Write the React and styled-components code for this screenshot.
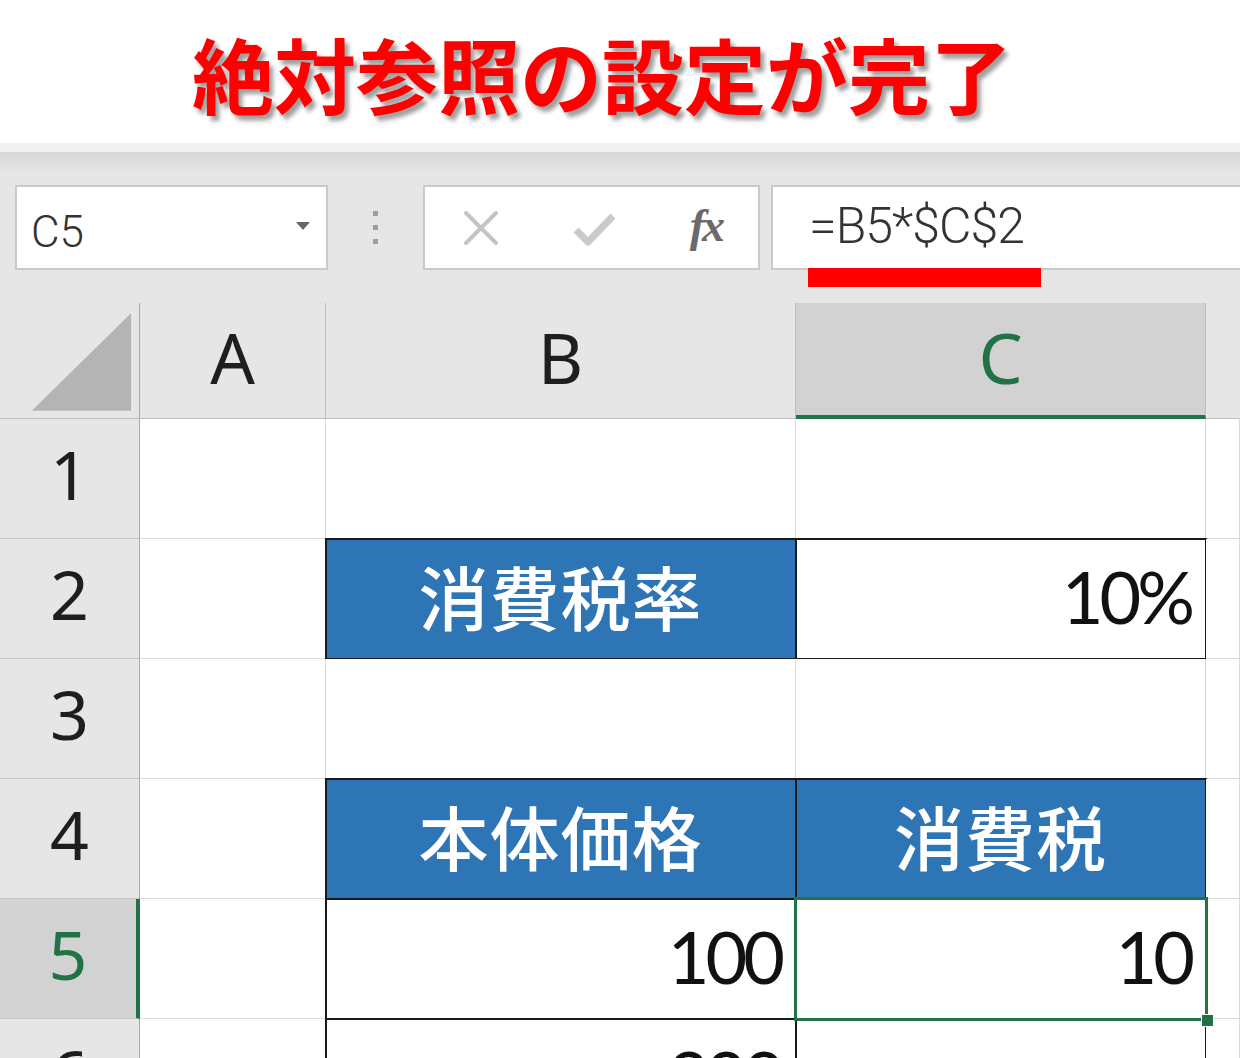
import React from "react";
import styled, { createGlobalStyle } from "styled-components";

// ---- Data ----

const columns = [
	{ key: "A", width: 186 },
	{ key: "B", width: 470 },
	{ key: "C", width: 410, selected: true },
];

const rows = [
	{ n: 1, cells: [{}, {}, {}] },
	{
		n: 2,
		cells: [
			{},
			{ text: "消費税率", head: true },
			{ text: "10%", boxed: true, num: true },
		],
	},
	{ n: 3, cells: [{}, {}, {}] },
	{
		n: 4,
		cells: [{}, { text: "本体価格", head: true }, { text: "消費税", head: true }],
	},
	{
		n: 5,
		selected: true,
		cells: [
			{},
			{ text: "100", boxed: true, num: true },
			{ text: "10", boxed: true, num: true, selected: true },
		],
	},
	{
		n: 6,
		cells: [{}, { text: "200", boxed: true, num: true }, { boxed: true }],
	},
];

// ---- Component ----

const App = () => {
	return (
		<>
			<GlobalStyle />
			<Page>
				<TitleBar>
					<Title>絶対参照の設定が完了</Title>
				</TitleBar>
				<Toolbar>
					<NameBox>
						<NameText>C5</NameText>
						<Caret />
					</NameBox>
					<Grip>
						<i />
						<i />
						<i />
					</Grip>
					<ButtonBox>
						<svg width="40" height="40" viewBox="0 0 40 40">
							<path
								d="M5 5 L35 35 M35 5 L5 35"
								stroke="#c4c4c4"
								strokeWidth="4"
								strokeLinecap="round"
								fill="none"
							/>
						</svg>
						<svg width="44" height="40" viewBox="0 0 44 40">
							<path
								d="M3 22 L15 34 L40 8"
								stroke="#cacaca"
								strokeWidth="7"
								strokeLinejoin="round"
								fill="none"
							/>
						</svg>
						<Fx>fx</Fx>
					</ButtonBox>
					<FormulaBox>
						<FormulaText>=B5*$C$2</FormulaText>
						<Underline />
					</FormulaBox>
				</Toolbar>
				<Sheet>
					<Corner>
						<svg width="140" height="116" viewBox="0 0 140 116">
							<polygon points="32,108 132,108 132,10" fill="#b4b4b4" />
						</svg>
					</Corner>
					{columns.map((c) => (
						<ColHeader key={c.key} $selected={c.selected}>
							{c.key}
						</ColHeader>
					))}
					<ColHeader $last />
					{rows.map((r) => (
						<React.Fragment key={r.n}>
							<RowHeader $selected={r.selected}>{r.n}</RowHeader>
							{r.cells.map((cell, i) => (
								<Cell
									key={i}
									$head={cell.head}
									$boxed={cell.boxed || cell.head}
									$num={cell.num}
									$selected={cell.selected}
								>
									{cell.text}
									{cell.selected && <Handle />}
								</Cell>
							))}
							<Cell />
						</React.Fragment>
					))}
				</Sheet>
			</Page>
		</>
	);
};

export default App;

// ---- Style ----

const GlobalStyle = createGlobalStyle`
	html, body {
		margin: 0;
		padding: 0;
		background: #fff;
		overflow: hidden;
	}
	* {
		box-sizing: border-box;
	}
`;

const Page = styled.div`
	width: 1240px;
	height: 1058px;
	overflow: hidden;
	font-family: "Noto Sans", "Noto Sans CJK JP", sans-serif;
`;

const TitleBar = styled.div`
	height: 152px;
	background: #fff;
	display: flex;
	align-items: center;
	justify-content: center;
	padding-right: 36px;
	padding-top: 2px;
	border-bottom: 9px solid #f2f1ef;
`;

const Title = styled.h1`
	margin: 0;
	font-family: "Noto Sans CJK JP", sans-serif;
	font-weight: 700;
	font-size: 82px;
	line-height: 1;
	color: #ff0000;
	text-shadow: 4px 5px 4px rgba(0, 0, 0, 0.38);
`;

const Toolbar = styled.div`
	height: 151px;
	background: linear-gradient(#d8d8d8, #e6e6e6 22px);
	display: flex;
	align-items: flex-start;
	padding: 33px 0 0 15px;
`;

const Box = styled.div`
	height: 85px;
	background: #fff;
	border: 2px solid #c9c9c9;
	display: flex;
	align-items: center;
`;

const NameBox = styled(Box)`
	width: 313px;
	padding: 0 16px 0 14px;
	justify-content: space-between;
`;

const NameText = styled.span`
	font-family: Roboto, sans-serif;
	font-size: 44px;
	font-weight: 300;
	color: #333;
	margin-top: 8px;
`;

const Caret = styled.span`
	width: 0;
	height: 0;
	border-left: 7px solid transparent;
	border-right: 7px solid transparent;
	border-top: 8px solid #666;
	margin-bottom: 4px;
`;

const Grip = styled.div`
	width: 95px;
	height: 85px;
	display: flex;
	flex-direction: column;
	align-items: center;
	justify-content: center;
	gap: 9px;

	i {
		width: 5px;
		height: 5px;
		background: #9e9e9e;
	}
`;

const ButtonBox = styled(Box)`
	width: 337px;
	padding: 0 36px 0 36px;
	justify-content: space-between;
`;

const Fx = styled.span`
	font-family: "Liberation Serif", serif;
	font-style: italic;
	font-weight: bold;
	font-size: 46px;
	color: #6a6a6a;
	letter-spacing: -3px;
	margin-top: -4px;
`;

const FormulaBox = styled(Box)`
	flex: 1;
	margin-left: 11px;
	border-right: none;
	padding-left: 36px;
	position: relative;
`;

const FormulaText = styled.span`
	font-family: Roboto, sans-serif;
	font-size: 50px;
	font-weight: 300;
	color: #333;
	letter-spacing: -1px;
	margin-top: -4px;
`;

const Underline = styled.span`
	position: absolute;
	left: 35px;
	top: 81px;
	width: 233px;
	height: 19px;
	background: #ff0000;
`;

const Sheet = styled.div`
	display: grid;
	grid-template-columns: 140px 186px 470px 410px 1fr;
	grid-template-rows: 116px repeat(6, 120px);
	background: #fff;
`;

const Corner = styled.div`
	background: #e6e6e6;
	border-right: 1px solid #a8a8a8;
	border-bottom: 1px solid #bdbdbd;
	display: flex;

	svg {
		display: block;
	}
`;

const ColHeader = styled.div`
	background: ${({ $selected }) => ($selected ? "#d2d2d2" : "#e6e6e6")};
	color: ${({ $selected }) => ($selected ? "#217346" : "#1e1e1e")};
	border-right: 1px solid ${({ $last }) => ($last ? "transparent" : "#bdbdbd")};
	border-bottom: ${({ $selected }) =>
		$selected ? "4px solid #217346" : "1px solid #bdbdbd"};
	display: flex;
	align-items: center;
	justify-content: center;
	font-family: "Noto Sans", sans-serif;
	font-size: 70px;
	padding-bottom: ${({ $selected }) => ($selected ? "5px" : "8px")};
`;

const RowHeader = styled.div`
	background: ${({ $selected }) => ($selected ? "#d2d2d2" : "#e6e6e6")};
	color: ${({ $selected }) => ($selected ? "#217346" : "#1e1e1e")};
	border-right: ${({ $selected }) =>
		$selected ? "4px solid #217346" : "1px solid #a8a8a8"};
	border-bottom: 1px solid #c6c6c6;
	display: flex;
	align-items: center;
	justify-content: center;
	font-family: "Noto Sans", sans-serif;
	font-size: 68px;
	padding-bottom: 10px;
`;

const Cell = styled.div`
	position: relative;
	background: ${({ $head }) => ($head ? "#2e75b6" : "#fff")};
	color: ${({ $head }) => ($head ? "#fff" : "#111")};
	border-right: 1px solid #d9d9d9;
	border-bottom: 1px solid #d9d9d9;
	outline: ${({ $boxed }) => ($boxed ? "2px solid #1a1a1a" : "none")};
	outline-offset: -1px;
	display: flex;
	align-items: center;
	justify-content: ${({ $num }) => ($num ? "flex-end" : "center")};
	padding-right: ${({ $num }) => ($num ? "14px" : "0")};
	font-family: ${({ $num }) =>
		$num ? "Lato, sans-serif" : '"Noto Sans CJK JP", sans-serif'};
	font-size: ${({ $num }) => ($num ? "72px" : "70px")};
	font-weight: ${({ $head }) => ($head ? 500 : 400)};
	letter-spacing: ${({ $num }) => ($num ? "-4px" : "1px")};
	padding-bottom: ${({ $num }) => ($num ? "6px" : "6px")};

	${({ $selected }) =>
		$selected &&
		`
		z-index: 2;
		&::after {
			content: "";
			position: absolute;
			inset: -2px -3px -3px -2px;
			border: 3px solid #217346;
		}
	`}
`;

const Handle = styled.span`
	position: absolute;
	right: -9px;
	bottom: -9px;
	width: 13px;
	height: 13px;
	background: #217346;
	border: 1px solid #fff;
	z-index: 3;
`;
